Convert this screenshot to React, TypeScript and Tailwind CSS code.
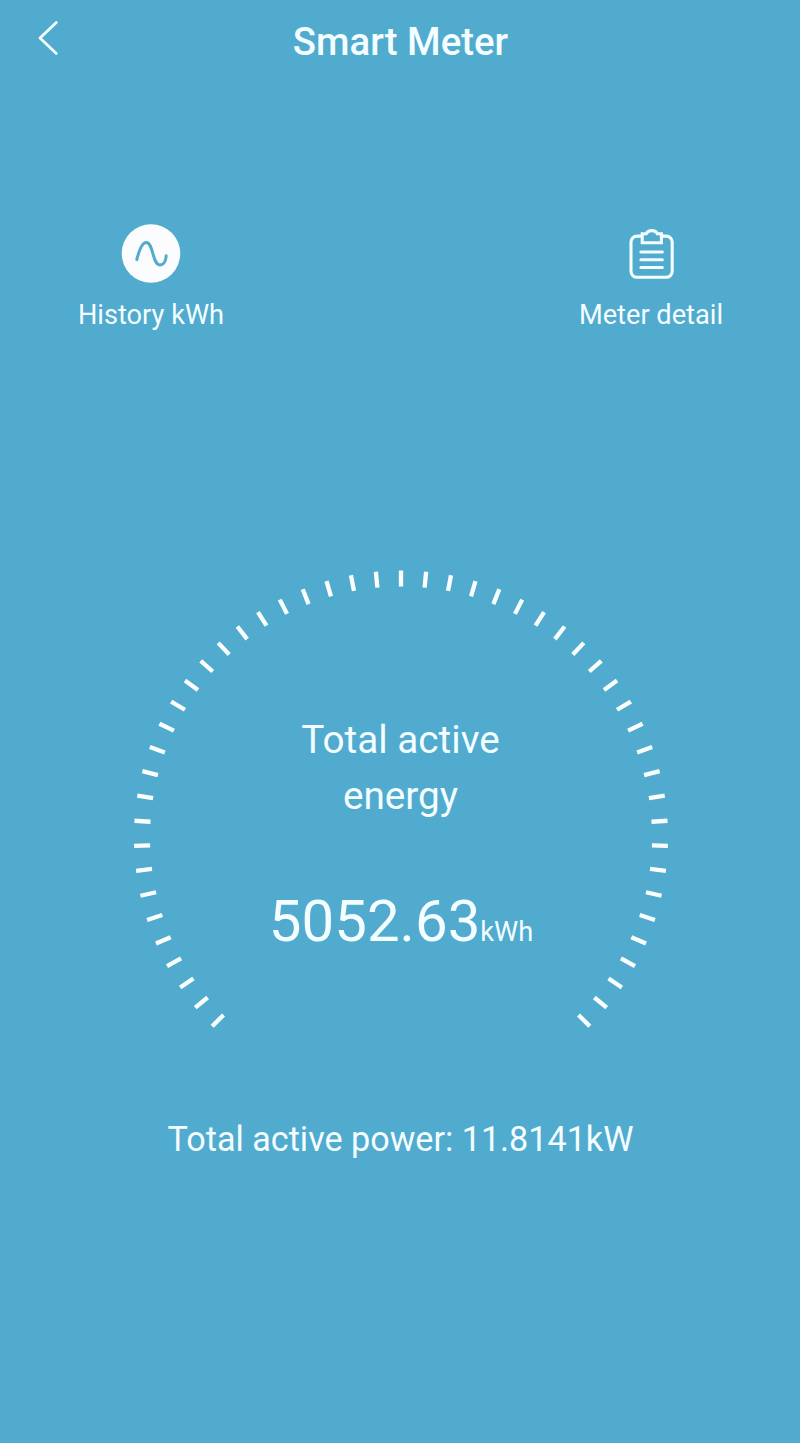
import type { ReactNode } from "react";

const TICK_COUNT = 51;
const SWEEP = 270;

const ticks = Array.from(
  { length: TICK_COUNT },
  (_, index) => -SWEEP / 2 + (index * SWEEP) / (TICK_COUNT - 1),
);

function BackIcon() {
  return (
    <svg
      viewBox="0 0 24 40"
      className="h-10 w-6"
      fill="none"
      stroke="currentColor"
      strokeWidth="2.8"
      strokeLinecap="round"
      strokeLinejoin="round"
      aria-hidden
    >
      <path d="M20.3 4.4 4 20.1l16.3 15.3" />
    </svg>
  );
}

function WaveIcon() {
  return (
    <svg viewBox="0 0 60 60" className="size-[60px]" fill="none" aria-hidden>
      <circle cx="30" cy="29.5" r="29.3" fill="#fafcfd" />
      <path
        d="M15.8 35.6C18.3 25.5 21.3 18.5 25.2 18.5C32.5 18.5 31.3 40.9 38.8 40.9C42.8 40.9 44.9 36.7 45.2 31.8"
        stroke="#50abcf"
        strokeWidth="3"
        strokeLinecap="round"
      />
    </svg>
  );
}

function ClipboardIcon() {
  return (
    <svg
      viewBox="0 0 60 60"
      className="size-[60px]"
      fill="none"
      stroke="currentColor"
      strokeWidth="3.1"
      aria-hidden
    >
      <path d="M21 12.1H16a6 6 0 0 0-6 6V47.300a6 6 0 0 0 6 6H45.200a6 6 0 0 0 6-6V18.100a6 6 0 0 0-6-6H40.500" />
      <path d="M21.200 18.700V9.700h4c1-2 3-3.100 5.600-3.100s4.600 1.100 5.600 3.100h4v9z" />
      <path d="M19.900 28h21.400M19.900 35.800h21.400M19.900 43.500h21.400" strokeLinecap="round" />
    </svg>
  );
}

function Shortcut({ icon, label }: Readonly<{ icon: ReactNode; label: string }>) {
  return (
    <button type="button" className="flex w-[150px] flex-col items-center gap-[13px]">
      {icon}
      <span className="text-[27.2px] leading-9 whitespace-nowrap">{label}</span>
    </button>
  );
}

function Gauge({ children }: Readonly<{ children: ReactNode }>) {
  return (
    <div className="grid size-[536px]">
      <svg
        viewBox="-268 -267.5 536 536"
        className="col-start-1 row-start-1 size-full"
        stroke="#fcffff"
        strokeWidth="4.3"
        aria-hidden
      >
        {ticks.map((angle) => (
          <line key={angle} y1="-267" y2="-251" transform={`rotate(${angle})`} />
        ))}
      </svg>
      <div className="col-start-1 row-start-1 flex flex-col items-center pt-[142px]">
        {children}
      </div>
    </div>
  );
}

function App() {
  return (
    <main className="flex min-h-[1443px] w-full flex-col items-center bg-[#50abcf] pl-px font-[Roboto,sans-serif] text-[#f4fdff]">
      <header className="grid h-[84px] w-full grid-cols-[1fr_auto_1fr]">
        <button type="button" className="mt-[18px] ml-[35px] self-start justify-self-start" aria-label="Back">
          <BackIcon />
        </button>
        <h1 className="self-center text-[38.4px] font-medium">Smart Meter</h1>
      </header>

      <nav className="mt-[140px] flex w-full justify-between pr-[74px] pl-[75px]">
        <Shortcut icon={<WaveIcon />} label="History kWh" />
        <Shortcut icon={<ClipboardIcon />} label="Meter detail" />
      </nav>

      <section className="mt-[237px]">
        <Gauge>
          <h2 className="w-60 text-center text-[38.7px] leading-[56px]">
            Total active energy
          </h2>
          <p className="mt-[56px] ml-px text-[58.2px] leading-[82px] whitespace-nowrap">
            5052.63<span className="text-[27.2px]">kWh</span>
          </p>
        </Gauge>
      </section>

      <p className="mt-[7px] text-[34.15px] leading-[52px]">
        Total active power: 11.8141kW
      </p>
    </main>
  );
}

export default App;
